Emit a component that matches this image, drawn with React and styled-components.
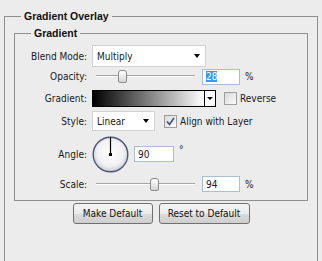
import React from 'react';
import styled, { createGlobalStyle } from 'styled-components';

const Global = createGlobalStyle`
  html, body { margin: 0; padding: 0; background: #ececec; }
  body {
    font-family: "DejaVu Sans Condensed", "Liberation Sans", sans-serif;
    font-size: 10px;
    color: #1a1a1a;
  }
`;

const Page = styled.div`
  width: 322px;
  height: 261px;
  overflow: hidden;
  box-sizing: border-box;
  padding: 10px 0 0 4px;
  background: #ececec;
`;

const Group = styled.fieldset`
  margin: 0;
  min-width: 0;
  box-sizing: border-box;
  border: 1px solid #8f8f8f;
  width: ${p => p.$w}px;
  height: ${p => (p.$h ? `${p.$h}px` : 'auto')};
  padding: ${p => p.$pad};
`;

const Legend = styled.legend`
  font-family: "Liberation Sans", sans-serif;
  font-weight: bold;
  font-size: 10.5px;
  line-height: 12px;
  color: #111;
  padding: 0 3px;
  margin-left: ${p => p.$ml}px;
`;

const Row = styled.div`
  display: flex;
  align-items: center;
  height: ${p => p.$h}px;
`;

const Label = styled.span`
  flex: none;
  width: 72px;
  margin-right: 5px;
  text-align: right;
  white-space: nowrap;
`;

const Select = styled.div`
  flex: none;
  display: flex;
  align-items: center;
  justify-content: space-between;
  box-sizing: border-box;
  width: ${p => p.$w}px;
  height: ${p => p.$h}px;
  padding: 0 5px 0 4px;
  background: #fff;
  border: 1px solid #d2d2d2;
`;

const Arrow = styled.span`
  width: 0;
  height: 0;
  border-left: 3.5px solid transparent;
  border-right: 3.5px solid transparent;
  border-top: 4px solid #000;
`;

const Track = styled.div`
  position: relative;
  flex: none;
  width: 99px;
  height: 13px;
  margin-left: 4px;
  &::before {
    content: "";
    position: absolute;
    left: 0;
    right: 0;
    top: 5px;
    border-top: 1px solid #a6a6a6;
    border-bottom: 1px solid #fff;
  }
`;

const Thumb = styled.span`
  position: absolute;
  top: 0;
  left: ${p => p.$pos}px;
  width: 7px;
  height: 11px;
  border: 1px solid #8c8c8c;
  border-radius: 3px 3px 2px 2px;
  background: linear-gradient(#ffffff, #d6d6d6);
`;

const NumBox = styled.div`
  flex: none;
  box-sizing: border-box;
  width: ${p => p.$w}px;
  height: 16px;
  margin-left: ${p => p.$ml}px;
  padding-left: 3px;
  display: flex;
  align-items: center;
  background: #fff;
  border: 1px solid #a9bdd6;
`;

const Selected = styled.span`
  background: #3399ff;
  color: #fff;
`;

const Unit = styled.span`
  margin-left: ${p => p.$ml}px;
  align-self: ${p => (p.$top ? 'flex-start' : 'center')};
  margin-top: ${p => (p.$top ? 12 : 0)}px;
`;

const GradientBox = styled.div`
  flex: none;
  display: flex;
  box-sizing: border-box;
  width: 124px;
  height: 17px;
  border: 1px solid #000;
`;

const GradientFill = styled.div`
  flex: 1;
  background: linear-gradient(to right, #000, #fff);
`;

const DropBtn = styled.div`
  flex: none;
  width: 10px;
  display: flex;
  align-items: center;
  justify-content: center;
  background: #fff;
  border-left: 1px solid #000;
`;

const SmallArrow = styled.span`
  width: 0;
  height: 0;
  border-left: 3px solid transparent;
  border-right: 3px solid transparent;
  border-top: 3px solid #000;
`;

const Check = styled.label`
  display: flex;
  align-items: center;
  margin-left: ${p => p.$ml}px;
  white-space: nowrap;
`;

const Box = styled.span`
  flex: none;
  display: flex;
  align-items: center;
  justify-content: center;
  box-sizing: border-box;
  width: 13px;
  height: 13px;
  margin-right: 3px;
  border: 1px solid #9e9e9e;
  background: linear-gradient(135deg, #d9d9d9, #fbfbfb);
`;

const Dial = styled.svg`
  flex: none;
  display: block;
`;

const Buttons = styled.div`
  display: flex;
  justify-content: center;
  gap: 6px;
  margin-top: 2px;
`;

const Button = styled.button`
  box-sizing: border-box;
  width: ${p => p.$w}px;
  height: 21px;
  padding: 0;
  font-family: inherit;
  font-size: 10px;
  color: #111;
  border: 1px solid #707070;
  border-radius: 3px;
  background: linear-gradient(#f5f5f5 0%, #ebebeb 50%, #dbdbdb 51%, #cfcfcf 100%);
`;

export default function App() {
  return (
    <>
      <Global />
      <Page>
        <Group $w={314} $h={300} $pad="5px 9px 0 9px">
          <Legend $ml={7}>Gradient Overlay</Legend>
          <Group $w={294} $pad="6px 0 8px 0">
            <Legend $ml={16}>Gradient</Legend>
            <Row $h={22}>
              <Label>Blend Mode:</Label>
              <Select $w={114} $h={22}>
                <span>Multiply</span>
                <Arrow />
              </Select>
            </Row>
            <Row $h={19}>
              <Label>Opacity:</Label>
              <Track>
                <Thumb $pos={22} />
              </Track>
              <NumBox $w={38} $ml={7}>
                <Selected>28</Selected>
              </NumBox>
              <Unit $ml={5}>%</Unit>
            </Row>
            <Row $h={24}>
              <Label>Gradient:</Label>
              <GradientBox>
                <GradientFill />
                <DropBtn>
                  <SmallArrow />
                </DropBtn>
              </GradientBox>
              <Check $ml={8}>
                <Box />
                Reverse
              </Check>
            </Row>
            <Row $h={22}>
              <Label>Style:</Label>
              <Select $w={63} $h={20}>
                <span>Linear</span>
                <Arrow />
              </Select>
              <Check $ml={9}>
                <Box>
                  <svg width="9" height="9" viewBox="0 0 9 9">
                    <path d="M1 4.5 L3.5 7.5 L8 1" fill="none" stroke="#3d4f86" strokeWidth="1.6" />
                  </svg>
                </Box>
                Align with Layer
              </Check>
            </Row>
            <Row $h={44}>
              <Label>Angle:</Label>
              <Dial width="37" height="37" viewBox="0 0 37 37">
                <defs>
                  <radialGradient id="dialFill" cx="50%" cy="45%" r="55%">
                    <stop offset="0%" stopColor="#ffffff" />
                    <stop offset="70%" stopColor="#f1f1f3" />
                    <stop offset="100%" stopColor="#c9ccd6" />
                  </radialGradient>
                </defs>
                <circle cx="18.5" cy="18.5" r="17.3" fill="url(#dialFill)" stroke="#4c5778" strokeWidth="1.4" />
                <line x1="18.5" y1="18.5" x2="18.5" y2="1.5" stroke="#000" strokeWidth="1.2" />
                <rect x="17" y="17" width="3" height="3" fill="#000" />
              </Dial>
              <NumBox $w={40} $ml={5}>90</NumBox>
              <Unit $ml={5} $top>°</Unit>
            </Row>
            <Row $h={16}>
              <Label>Scale:</Label>
              <Track>
                <Thumb $pos={54} />
              </Track>
              <NumBox $w={38} $ml={7}>94</NumBox>
              <Unit $ml={5}>%</Unit>
            </Row>
          </Group>
          <Buttons>
            <Button $w={80}>Make Default</Button>
            <Button $w={91}>Reset to Default</Button>
          </Buttons>
        </Group>
      </Page>
    </>
  );
}
